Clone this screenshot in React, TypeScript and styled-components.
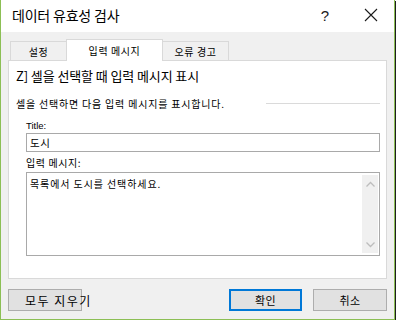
import React, { useState } from "react";
import styled, { createGlobalStyle } from "styled-components";

const GlobalStyle = createGlobalStyle`
  html, body {
    margin: 0;
    padding: 0;
    background: #ffffff;
  }
  * {
    box-sizing: border-box;
  }
`;

const KR = `"Noto Sans CJK KR", "Noto Sans", sans-serif`;

const TABS = ["설정", "입력 메시지", "오류 경고"];
const TAB_WIDTHS = [56, 97, 66];

const App = () => {
  const [activeTab, setActiveTab] = useState(1);
  const [title, setTitle] = useState("도시");
  const [message, setMessage] = useState("목록에서 도시를 선택하세요.");

  return (
    <>
      <GlobalStyle />
      <Window>
        <TitleBar>
          <TitleText>데이터 유효성 검사</TitleText>
          <TitleButton>?</TitleButton>
          <TitleButton>
            <svg width="14" height="14" viewBox="0 0 14 14">
              <path d="M1 1 L13 13 M13 1 L1 13" stroke="#1a1a1a" strokeWidth="1.1" />
            </svg>
          </TitleButton>
        </TitleBar>
        <Body>
          <TabStrip>
            {TABS.map((tab, idx) => (
              <Tab
                key={tab}
                $active={activeTab === idx}
                $width={TAB_WIDTHS[idx]}
                $first={idx === 0}
                $last={idx === TABS.length - 1}
                onClick={() => setActiveTab(idx)}
              >
                {tab}
              </Tab>
            ))}
          </TabStrip>
          <Panel>
            <CheckRow>Z] 셀을 선택할 때 입력 메시지 표시</CheckRow>
            <SubRow>
              <SubText>셀을 선택하면 다음 입력 메시지를 표시합니다.</SubText>
              <Rule />
            </SubRow>
            <FieldLabel $latin>Title:</FieldLabel>
            <TextInput value={title} onChange={e => setTitle(e.target.value)} />
            <FieldLabel $gap={5}>입력 메시지:</FieldLabel>
            <MessageBox>
              <MessageText
                value={message}
                onChange={e => setMessage(e.target.value)}
              />
              <ScrollBar>
                <svg width="9" height="6" viewBox="0 0 9 6">
                  <path d="M0.5 5.5 L4.5 1.5 L8.5 5.5" stroke="#bdbdbd" strokeWidth="1.3" fill="none" />
                </svg>
                <svg width="9" height="6" viewBox="0 0 9 6">
                  <path d="M0.5 0.5 L4.5 4.5 L8.5 0.5" stroke="#bdbdbd" strokeWidth="1.3" fill="none" />
                </svg>
              </ScrollBar>
            </MessageBox>
          </Panel>
          <ButtonRow>
            <ClearButton>모두 지우기</ClearButton>
            <Spacer />
            <DialogButton $primary>확인</DialogButton>
            <DialogButton>취소</DialogButton>
          </ButtonRow>
        </Body>
      </Window>
    </>
  );
};

export default App;

const Window = styled.div`
  width: 395px;
  height: 320px;
  display: flex;
  flex-direction: column;
  border-left: 1px solid #8cbf55;
  border-right: 1px solid #8cbf55;
  border-bottom: 1px solid #8cbf55;
  box-shadow: 1px 1px 0 #1e1e1e;
  background: #f0f0f0;
  font-family: ${KR};
  color: #000000;
`;

const TitleBar = styled.div`
  height: 32px;
  display: flex;
  align-items: center;
  background: #ffffff;
  padding-left: 11px;
`;

const TitleText = styled.div`
  flex: 1;
  font-size: 14px;
  padding-bottom: 2px;
  letter-spacing: -0.2px;
`;

const TitleButton = styled.div`
  width: 46px;
  height: 32px;
  display: flex;
  align-items: center;
  justify-content: center;
  font-family: "Liberation Sans", sans-serif;
  font-size: 15px;
  color: #1a1a1a;
  padding-bottom: 2px;
`;

const Body = styled.div`
  flex: 1;
  display: flex;
  flex-direction: column;
  padding: 7px 7px 0 7px;
`;

const TabStrip = styled.div`
  height: 21px;
  display: flex;
  align-items: flex-end;
  padding-left: 2px;
  position: relative;
  z-index: 1;
`;

const Tab = styled.div<{
  $active: boolean;
  $width: number;
  $first: boolean;
  $last: boolean;
}>`
  width: ${p => p.$width}px;
  height: ${p => (p.$active ? 22 : 19)}px;
  margin-bottom: ${p => (p.$active ? -1 : 0)}px;
  display: flex;
  align-items: center;
  justify-content: center;
  padding-bottom: ${p => (p.$active ? 1 : 0)}px;
  background: ${p => (p.$active ? "#ffffff" : "#f0f0f0")};
  border: 1px solid #d9d9d9;
  border-bottom: none;
  border-right: ${p => (p.$first ? "none" : "1px solid #d9d9d9")};
  border-left: ${p => (p.$last ? "none" : "1px solid #d9d9d9")};
  font-size: 10px;
  letter-spacing: 0.6px;
  cursor: default;
`;

const Panel = styled.div`
  height: 219px;
  display: flex;
  flex-direction: column;
  background: #ffffff;
  border: 1px solid #d9d9d9;
  padding: 7px 6px 0 7px;
`;

const CheckRow = styled.div`
  height: 16px;
  line-height: 16px;
  font-size: 13px;
  letter-spacing: -0.1px;
  white-space: nowrap;
`;

const SubRow = styled.div`
  height: 14px;
  margin-top: 12px;
  display: flex;
  align-items: center;
  gap: 41px;
`;

const SubText = styled.div`
  font-size: 10px;
  letter-spacing: 0.8px;
  white-space: nowrap;
`;

const Rule = styled.div`
  flex: 1;
  height: 1px;
  background: #dadada;
`;

const FieldLabel = styled.div<{ $latin?: boolean; $gap?: number }>`
  height: 12px;
  line-height: 12px;
  margin-top: ${p => p.$gap ?? 10}px;
  margin-left: 10px;
  font-family: ${p => (p.$latin ? `"Liberation Sans", sans-serif` : KR)};
  font-size: ${p => (p.$latin ? 9.5 : 10)}px;
  letter-spacing: ${p => (p.$latin ? 0 : 0.6)}px;
`;

const TextInput = styled.input`
  margin: 1px 0 0 10px;
  height: 19px;
  border: 1px solid #a9a9a9;
  padding: 0 3px;
  font-family: ${KR};
  font-size: 10.5px;
  letter-spacing: 0.5px;
  outline: none;
  background: #ffffff;
`;

const MessageBox = styled.div`
  margin: 3px 0 0 10px;
  height: 84px;
  display: flex;
  border: 1px solid #a9a9a9;
  padding: 2px 1px 2px 0;
  background: #ffffff;
`;

const MessageText = styled.textarea`
  flex: 1;
  border: none;
  resize: none;
  outline: none;
  padding: 2px 3px;
  font-family: ${KR};
  font-size: 10px;
  letter-spacing: 0.9px;
  line-height: 14px;
  overflow: hidden;
`;

const ScrollBar = styled.div`
  width: 16px;
  display: flex;
  flex-direction: column;
  align-items: center;
  justify-content: space-between;
  padding: 6px 0 5px 0;
  background: #f0f0f0;
`;

const ButtonRow = styled.div`
  margin-top: 10px;
  height: 22px;
  display: flex;
  gap: 11px;
`;

const Spacer = styled.div`
  flex: 1;
`;

const ClearButton = styled.button`
  width: 74px;
  height: 22px;
  padding: 0 0 0 16px;
  text-align: left;
  white-space: nowrap;
  overflow: visible;
  background: #e1e1e1;
  border: 1px solid #adadad;
  font-family: ${KR};
  font-size: 12px;
  letter-spacing: 1.5px;
  color: #000000;
`;

const DialogButton = styled.button<{ $primary?: boolean }>`
  width: ${p => (p.$primary ? 73 : 74)}px;
  height: 22px;
  padding: 0;
  background: #e1e1e1;
  border: ${p => (p.$primary ? "2px solid #0078d7" : "1px solid #adadad")};
  font-family: ${KR};
  font-size: 11px;
  letter-spacing: 0.5px;
  color: #000000;
`;
